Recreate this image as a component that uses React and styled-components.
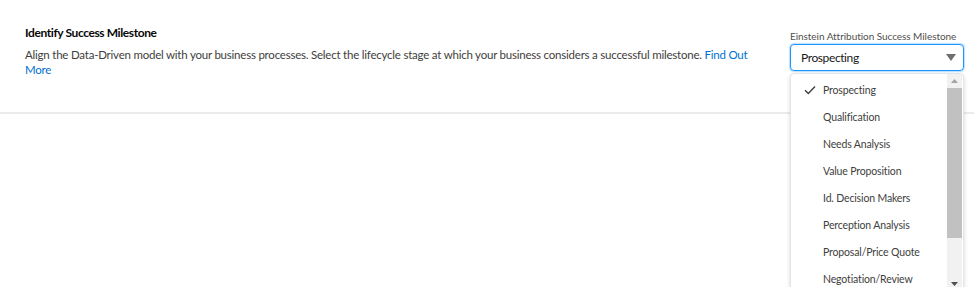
import React from 'react';
import styled, { createGlobalStyle } from 'styled-components';

const GlobalStyle = createGlobalStyle`
  html, body {
    margin: 0;
    padding: 0;
    background: #ffffff;
    overflow: hidden;
  }
  body {
    font-family: Lato, "Open Sans", sans-serif;
    color: #3e3e3c;
  }
`;

const stages = [
  'Prospecting',
  'Qualification',
  'Needs Analysis',
  'Value Proposition',
  'Id. Decision Makers',
  'Perception Analysis',
  'Proposal/Price Quote',
  'Negotiation/Review',
];

function Check() {
  return (
    <svg width="12" height="10" viewBox="0 0 12 10">
      <path d="M1 5.2 L4.3 8.4 L11 1.4" fill="none" stroke="#3e3e3c" strokeWidth="1.4" />
    </svg>
  );
}

function Arrow({ up }) {
  return (
    <svg width="7" height="4" viewBox="0 0 7 4">
      <path d={up ? 'M0 4 L3.5 0 L7 4 Z' : 'M0 0 L3.5 4 L7 0 Z'} fill={up ? '#a3a3a3' : '#505050'} />
    </svg>
  );
}

function App() {
  const selected = 'Prospecting';
  return (
    <Page>
      <GlobalStyle />
      <Section>
        <Info>
          <Title>Identify Success Milestone</Title>
          <Description>
            Align the Data-Driven model with your business processes. Select the lifecycle stage at which your
            business considers a successful milestone. <Link>Find Out More</Link>
          </Description>
        </Info>
        <Field>
          <FieldLabel>Einstein Attribution Success Milestone</FieldLabel>
          <Combobox>
            <span>{selected}</span>
            <svg width="10" height="7" viewBox="0 0 10 7">
              <path d="M0 0 L10 0 L5 7 Z" fill="#706e6b" />
            </svg>
          </Combobox>
          <Listbox>
            <Options>
              {stages.map((s) => (
                <Option key={s}>
                  <CheckSlot>{s === selected && <Check />}</CheckSlot>
                  {s}
                </Option>
              ))}
            </Options>
            <Scrollbar>
              <ScrollButton><Arrow up /></ScrollButton>
              <Thumb />
              <Track />
              <ScrollButton><Arrow /></ScrollButton>
            </Scrollbar>
          </Listbox>
        </Field>
      </Section>
      <Divider />
    </Page>
  );
}

const Page = styled.div`
  width: 974px;
  height: 287px;
`;

const Section = styled.div`
  display: flex;
  justify-content: space-between;
  padding: 25px 10px 0 25px;
  height: 86px;
  box-sizing: border-box;
`;

const Info = styled.div`
  width: 735px;
`;

const Title = styled.div`
  font-size: 12px;
  font-weight: 700;
  letter-spacing: -0.4px;
  color: #080707;
  line-height: 16px;
  margin-bottom: 6px;
`;

const Description = styled.p`
  margin: 0;
  font-size: 11.5px;
  letter-spacing: -0.22px;
  line-height: 15px;
  color: #3e3e3c;
`;

const Link = styled.a`
  color: #0070d2;
  cursor: pointer;
`;

const Field = styled.div`
  position: relative;
  width: 174px;
  padding-top: 4px;
`;

const FieldLabel = styled.div`
  font-size: 10px;
  line-height: 14px;
  letter-spacing: -0.05px;
  color: #514f4d;
  margin-bottom: 1px;
  white-space: nowrap;
`;

const Combobox = styled.div`
  display: flex;
  align-items: center;
  justify-content: space-between;
  box-sizing: border-box;
  height: 27px;
  padding: 0 7px 0 10px;
  border: 1px solid #1b96ff;
  border-radius: 4px;
  box-shadow: 0 0 2px #1b96ff;
  font-size: 12px;
  letter-spacing: -0.4px;
  color: #181818;
`;

const Listbox = styled.div`
  position: absolute;
  top: 48px;
  left: 0;
  width: 174px;
  height: 219px;
  box-sizing: border-box;
  display: flex;
  background: #ffffff;
  border: 1px solid #e5e5e5;
  border-radius: 4px;
  box-shadow: 0 2px 4px rgba(0, 0, 0, 0.16);
  z-index: 2;
`;

const Options = styled.ul`
  flex: 1;
  list-style: none;
  margin: 0;
  padding: 2px 0 0;
`;

const Option = styled.li`
  display: flex;
  align-items: center;
  height: 27px;
  padding-left: 13px;
  font-size: 10.5px;
  letter-spacing: -0.15px;
  color: #3e3e3c;
`;

const CheckSlot = styled.span`
  display: inline-flex;
  width: 19px;
`;

const Scrollbar = styled.div`
  width: 15px;
  display: flex;
  flex-direction: column;
  background: #f1f1f1;
  margin-right: 1px;
`;

const ScrollButton = styled.div`
  height: 14px;
  display: flex;
  align-items: center;
  justify-content: center;
`;

const Thumb = styled.div`
  height: 150px;
  background: #c1c1c1;
`;

const Track = styled.div`
  flex: 1;
`;

const Divider = styled.div`
  height: 2px;
  margin-top: 26px;
  background: #ebebeb;
`;

export default App;
